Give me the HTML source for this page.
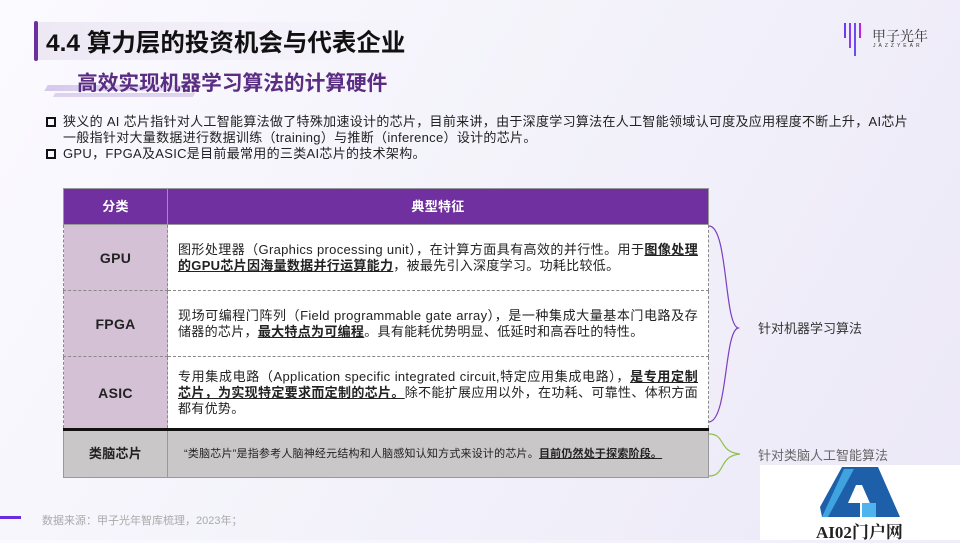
<!DOCTYPE html><html><head><meta charset="utf-8"><style>
*{margin:0;padding:0;box-sizing:border-box}
body{width:960px;height:540px;overflow:hidden;position:relative;background:linear-gradient(120deg,#fbfaff 0%,#f3f2fa 50%,#ece8f8 100%);font-family:"Liberation Sans","Noto Sans CJK SC",sans-serif;color:#222}
.a{position:absolute}
td{border:1px dashed #888;font-size:13px;line-height:16px;letter-spacing:0.3px}
td.t{text-align:justify;text-align-last:left}
u{text-decoration:underline}
</style></head><body>
<div class="a" style="left:34px;top:21px;width:4px;height:40px;background:#6c2f9e;border-radius:2px"></div>
<div class="a" style="left:38px;top:22px;width:380px;height:38px;background:linear-gradient(90deg,#ede8f4,rgba(240,236,246,0))"></div>
<div class="a" style="left:46px;top:24px;font-size:24.5px;font-weight:bold;color:#111">4.4 算力层的投资机会与代表企业</div>
<div class="a" style="left:46px;top:85px;width:140px;height:6px;background:linear-gradient(90deg,#d5c9ec,#e8e0f5);transform:skewX(-30deg)"></div>
<div class="a" style="left:54px;top:93px;width:140px;height:4px;background:#ddd3ef;transform:skewX(-30deg)"></div>
<div class="a" style="left:77px;top:66px;font-size:20.7px;font-weight:bold;color:#5a2d82">高效实现机器学习算法的计算硬件</div>
<div class="a" style="left:843px;top:22px;width:20px;height:36px">
<svg width="20" height="36"><g stroke-width="2"><line x1="2" y1="1" x2="2" y2="16" stroke="#6a3cf0"/><line x1="7" y1="1" x2="7" y2="26" stroke="#8a3cf0"/><line x1="12" y1="1" x2="12" y2="34" stroke="#6a4cf0"/><line x1="17" y1="1" x2="17" y2="16" stroke="#c020e0"/></g></svg></div>
<div class="a" style="left:872px;top:26px;font-size:14px;color:#333;font-family:'Noto Serif CJK SC',serif">甲子光年</div>
<div class="a" style="left:873px;top:43px;font-size:5px;letter-spacing:3px;color:#333">JAZZYEAR</div>
<div class="a" style="left:46px;top:114px;font-size:13px;line-height:16px;width:862px;letter-spacing:0.3px">
<div style="padding-left:17px;position:relative;text-align:justify"><span class="a" style="left:0;top:3px;width:10px;height:10px;border:2px solid #111"></span>狭义的 AI 芯片指针对人工智能算法做了特殊加速设计的芯片，目前来讲，由于深度学习算法在人工智能领域认可度及应用程度不断上升，AI芯片一般指针对大量数据进行数据训练（training）与推断（inference）设计的芯片。</div>
<div style="padding-left:17px;position:relative"><span class="a" style="left:0;top:3px;width:10px;height:10px;border:2px solid #111"></span>GPU，FPGA及ASIC是目前最常用的三类AI芯片的技术架构。</div></div>
<table class="a" style="left:63px;top:188px;width:646px;border-collapse:collapse">
<tr style="height:36px;background:#7030a0;color:#fff;font-weight:bold"><td style="width:104px;text-align:center;border:1px solid #999">分类</td><td style="text-align:center;border:1px solid #999">典型特征</td></tr>
<tr style="height:66px"><td style="background:#d5c1d6;text-align:center;font-weight:bold;font-size:14px">GPU</td><td class="t" style="background:#fff;padding:0 10px">图形处理器（Graphics processing unit），在计算方面具有高效的并行性。用于<b><u>图像处理的GPU芯片因海量数据并行运算能力</u></b>，被最先引入深度学习。功耗比较低。</td></tr>
<tr style="height:66px"><td style="background:#d5c1d6;text-align:center;font-weight:bold;font-size:14px">FPGA</td><td class="t" style="background:#fff;padding:0 10px">现场可编程门阵列（Field programmable gate array），是一种集成大量基本门电路及存储器的芯片，<b><u>最大特点为可编程</u></b>。具有能耗优势明显、低延时和高吞吐的特性。</td></tr>
<tr style="height:73px;border-bottom:3px solid #111"><td style="background:#d5c1d6;text-align:center;font-weight:bold;font-size:14px">ASIC</td><td class="t" style="background:#fff;padding:0 10px">专用集成电路（Application specific integrated circuit,特定应用集成电路），<b><u>是专用定制芯片，为实现特定要求而定制的芯片。</u></b>除不能扩展应用以外，在功耗、可靠性、体积方面都有优势。</td></tr>
<tr style="height:48px;background:#c9c7c8"><td style="text-align:center;font-weight:bold;font-size:13px;border:1px solid #999">类脑芯片</td><td style="padding:0 16px;font-size:11px;border:1px solid #999;letter-spacing:0.2px">“类脑芯片”是指参考人脑神经元结构和人脑感知认知方式来设计的芯片。<b><u>目前仍然处于探索阶段。</u></b></td></tr>
</table>
<svg class="a" style="left:708px;top:224px" width="60" height="260"><path d="M1 2 C20 2 16 100 30 104 C16 108 20 196 1 198" fill="none" stroke="#7b3fc0" stroke-width="1.2"/><path d="M1 210 C18 210 10 228 32 230 C10 232 18 252 1 252" fill="none" stroke="#8bc34a" stroke-width="1.2"/></svg>
<div class="a" style="left:758px;top:318px;font-size:13px;color:#333">针对机器学习算法</div>
<div class="a" style="left:758px;top:445px;font-size:13px;color:#666">针对类脑人工智能算法</div>
<div class="a" style="left:760px;top:465px;width:200px;height:75px;background:#fff"></div>
<svg class="a" style="left:820px;top:467px" width="82" height="52"><polygon points="22,0 58,0 80,50 56,50 42,18 36,18 28,36 40,36 40,50 2,50 0,40" fill="#1d5fa8"/><polygon points="2,50 24,2 34,2 8,50" fill="#3fa3e0"/><rect x="42" y="36" width="14" height="14" fill="#4fb3ee"/></svg>
<div class="a" style="left:816px;top:518px;font-size:17px;font-weight:bold;color:#222;font-family:'Liberation Serif','Noto Serif CJK SC',serif">AI02门户网</div>
<div class="a" style="left:0;top:516px;width:21px;height:3px;background:#6a2ce0"></div>
<div class="a" style="left:42px;top:512px;font-size:11px;color:#aaa">数据来源：甲子光年智库梳理，2023年；</div>
</body></html>
